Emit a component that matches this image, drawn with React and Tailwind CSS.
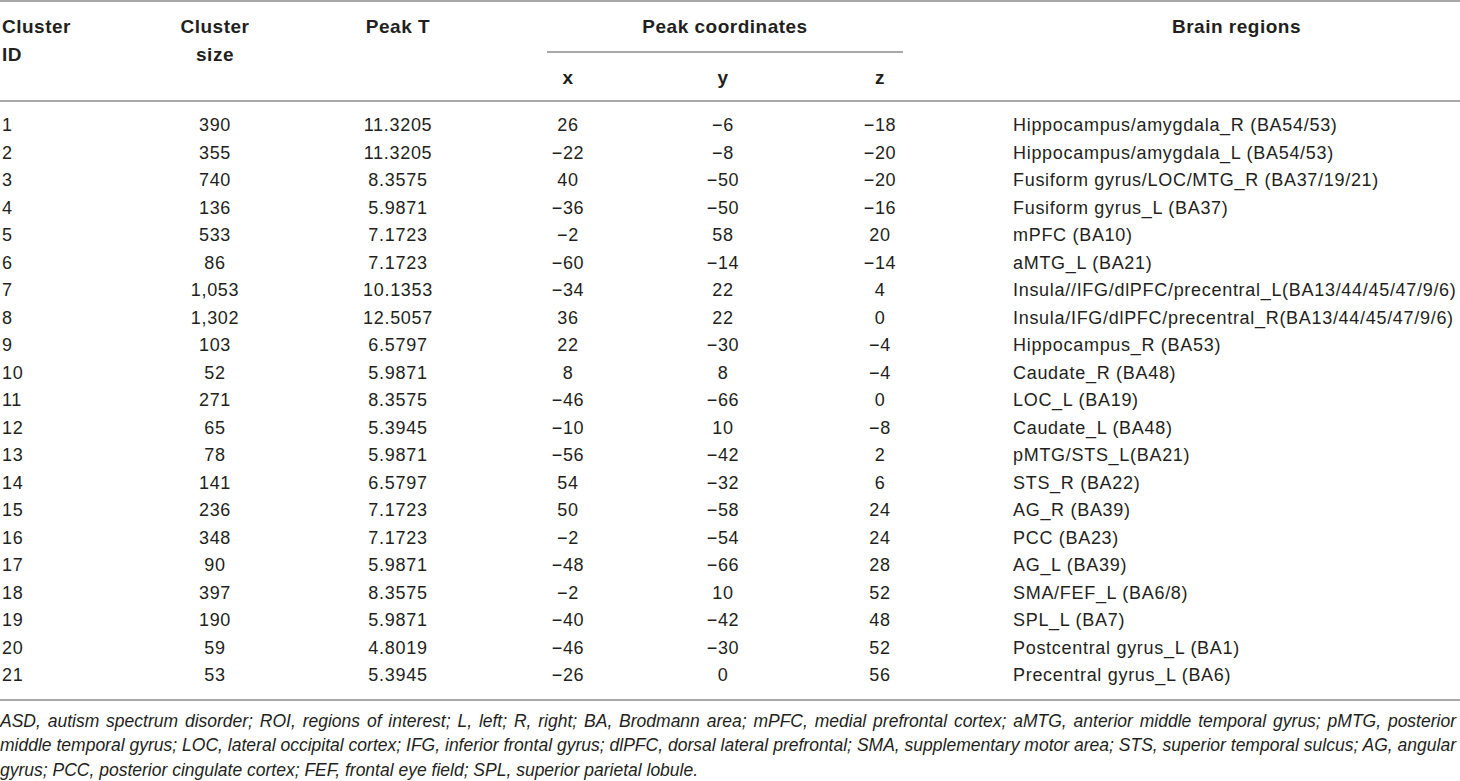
const rows = [
    ['1', '390', '11.3205', '26', '−6', '−18', 'Hippocampus/amygdala_R (BA54/53)'],
    ['2', '355', '11.3205', '−22', '−8', '−20', 'Hippocampus/amygdala_L (BA54/53)'],
    ['3', '740', '8.3575', '40', '−50', '−20', 'Fusiform gyrus/LOC/MTG_R (BA37/19/21)'],
    ['4', '136', '5.9871', '−36', '−50', '−16', 'Fusiform gyrus_L (BA37)'],
    ['5', '533', '7.1723', '−2', '58', '20', 'mPFC (BA10)'],
    ['6', '86', '7.1723', '−60', '−14', '−14', 'aMTG_L (BA21)'],
    ['7', '1,053', '10.1353', '−34', '22', '4', 'Insula//IFG/dlPFC/precentral_L(BA13/44/45/47/9/6)'],
    ['8', '1,302', '12.5057', '36', '22', '0', 'Insula/IFG/dlPFC/precentral_R(BA13/44/45/47/9/6)'],
    ['9', '103', '6.5797', '22', '−30', '−4', 'Hippocampus_R (BA53)'],
    ['10', '52', '5.9871', '8', '8', '−4', 'Caudate_R (BA48)'],
    ['11', '271', '8.3575', '−46', '−66', '0', 'LOC_L (BA19)'],
    ['12', '65', '5.3945', '−10', '10', '−8', 'Caudate_L (BA48)'],
    ['13', '78', '5.9871', '−56', '−42', '2', 'pMTG/STS_L(BA21)'],
    ['14', '141', '6.5797', '54', '−32', '6', 'STS_R (BA22)'],
    ['15', '236', '7.1723', '50', '−58', '24', 'AG_R (BA39)'],
    ['16', '348', '7.1723', '−2', '−54', '24', 'PCC (BA23)'],
    ['17', '90', '5.9871', '−48', '−66', '28', 'AG_L (BA39)'],
    ['18', '397', '8.3575', '−2', '10', '52', 'SMA/FEF_L (BA6/8)'],
    ['19', '190', '5.9871', '−40', '−42', '48', 'SPL_L (BA7)'],
    ['20', '59', '4.8019', '−46', '−30', '52', 'Postcentral gyrus_L (BA1)'],
    ['21', '53', '5.3945', '−26', '0', '56', 'Precentral gyrus_L (BA6)'],
];

const cols = 'grid grid-cols-[150px_130px_236px_104px_206px_108px_1fr]';

const ClusterTable = () => {
    return (
        <div className="w-[1460px] h-[781px] overflow-hidden bg-white text-[#231f20] font-['Liberation_Sans',Arial,sans-serif]">
            <div className="h-[2px] bg-[#a8a8a8]" />

            {/* Header */}
            <div className={`${cols} text-[19px] font-bold leading-[28px] tracking-[0.5px]`}>
                <div className="pt-[11px] pl-[2px]">Cluster<br />ID</div>
                <div className="pt-[11px] text-center">Cluster<br />size</div>
                <div className="pt-[11px] text-center">Peak T</div>
                <div className="col-span-3 pt-[11px] pb-[8px]">
                    <div className="text-center">Peak coordinates</div>
                    <div className="mx-[31px] mt-[10px] h-[2px] bg-[#a8a8a8]" />
                    <div className="mt-[11px] grid grid-cols-[104px_206px_108px] text-center">
                        <div>x</div>
                        <div>y</div>
                        <div>z</div>
                    </div>
                </div>
                <div className="pt-[11px] pl-[79px] text-center">Brain regions</div>
            </div>
            <div className="h-[2px] bg-[#a8a8a8]" />

            {/* Body */}
            <div className="pt-[10px] pb-[9px] text-[18px] tracking-[0.7px]">
                {rows.map((r) => (
                    <div key={r[0]} className={`${cols} h-[27.5px] items-center whitespace-nowrap`}>
                        <div className="pl-[2px]">{r[0]}</div>
                        <div className="text-center">{r[1]}</div>
                        <div className="text-center">{r[2]}</div>
                        <div className="text-center">{r[3]}</div>
                        <div className="text-center">{r[4]}</div>
                        <div className="text-center">{r[5]}</div>
                        <div className="pl-[79px]">{r[6]}</div>
                    </div>
                ))}
            </div>
            <div className="h-[2px] bg-[#a8a8a8]" />

            {/* Footnote */}
            <div className="pt-[8px] pr-[4px] italic text-[17.5px] leading-[24.5px] whitespace-nowrap">
                <div className="text-justify [text-align-last:justify]">ASD, autism spectrum disorder; ROI, regions of interest; L, left; R, right; BA, Brodmann area; mPFC, medial prefrontal cortex; aMTG, anterior middle temporal gyrus; pMTG, posterior</div>
                <div className="text-justify [text-align-last:justify]">middle temporal gyrus; LOC, lateral occipital cortex; IFG, inferior frontal gyrus; dlPFC, dorsal lateral prefrontal; SMA, supplementary motor area; STS, superior temporal sulcus; AG, angular</div>
                <div>gyrus; PCC, posterior cingulate cortex; FEF, frontal eye field; SPL, superior parietal lobule.</div>
            </div>
        </div>
    );
};

export default function App() {
    return <ClusterTable />;
}
